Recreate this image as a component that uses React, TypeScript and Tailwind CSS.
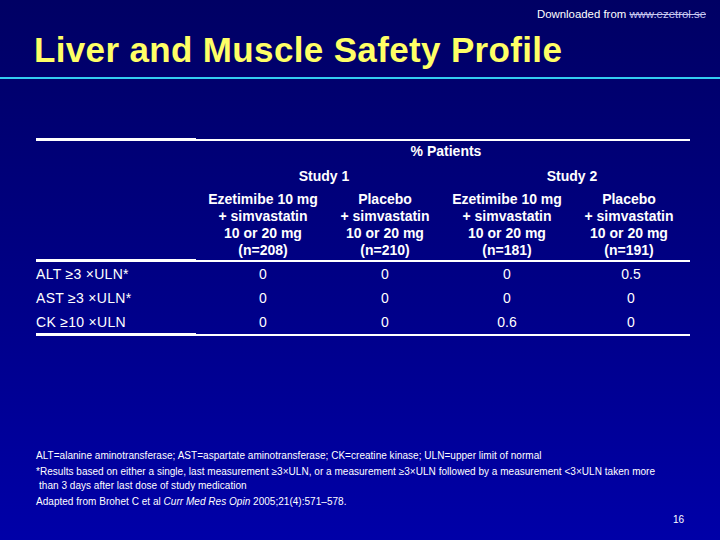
import React from "react";

const cols = [
  { l1: "Ezetimibe 10 mg", n: "(n=208)" },
  { l1: "Placebo", n: "(n=210)" },
  { l1: "Ezetimibe 10 mg", n: "(n=181)" },
  { l1: "Placebo", n: "(n=191)" },
];

const rows = [
  { label: "ALT \u22653 \u00d7ULN*", v: ["0", "0", "0", "0.5"] },
  { label: "AST \u22653 \u00d7ULN*", v: ["0", "0", "0", "0"] },
  { label: "CK \u226510 \u00d7ULN", v: ["0", "0", "0.6", "0"] },
];

function Rule() {
  return (
    <div className="flex items-center h-[3px]">
      <div className="w-[160px] h-[3px] bg-white" />
      <div className="flex-1 h-[2px] bg-white" />
    </div>
  );
}

export default function App() {
  return (
    <div
      className="w-[720px] h-[540px] flex flex-col bg-gradient-to-b from-[#000064] via-[#000084] to-[#0000a8] text-white overflow-hidden"
      style={{ fontFamily: '"Liberation Sans", Arial, sans-serif' }}
    >
      <div className="flex justify-end pr-[14px] pt-[8px] h-[22px] text-[11.4px] leading-[13px]">
        <span>Downloaded from&nbsp;</span>
        <span className="text-[#c8c8f0] line-through">www.ezetrol.se</span>
      </div>
      <div className="pl-[34px] mt-[6px] h-[48px] text-[35px] leading-[44px] font-bold text-[#ffff66] tracking-[0.35px]">
        Liver and Muscle Safety Profile
      </div>
      <div className="h-[2px] bg-[#33ccf2] mt-[1px]" />

      <div className="ml-[36px] w-[654px] mt-[59px]">
        <Rule />
        <div className="grid grid-cols-[166px_122px_122px_122px_122px] text-[14px]">
          <div />
          <div className="col-span-4 text-center font-bold leading-[20px]">% Patients</div>
          <div className="mt-[5px]" />
          <div className="col-span-2 text-center font-bold leading-[20px] mt-[5px]">Study 1</div>
          <div className="col-span-2 text-center font-bold leading-[20px] mt-[5px] pl-[8px]">Study 2</div>
          <div />
          {cols.map((c, i) => (
            <div key={i} className="text-center font-bold leading-[17px] mt-[5px]">
              <div>{c.l1}</div>
              <div>+ simvastatin</div>
              <div>10 or 20 mg</div>
              <div>{c.n}</div>
            </div>
          ))}
        </div>
        <Rule />
        <div className="grid grid-cols-[166px_122px_122px_122px_122px] text-[14px] h-[71px]">
          {rows.map((r, i) => (
            <React.Fragment key={i}>
              <div className="leading-[24px] tracking-[0.3px]">{r.label}</div>
              {r.v.map((v, j) => (
                <div key={j} className={"text-center leading-[24px]" + (j === 3 ? " pl-[4px]" : "")}>
                  {v}
                </div>
              ))}
            </React.Fragment>
          ))}
        </div>
        <Rule />
      </div>

      <div className="ml-[36px] mt-[113px] text-[10px] leading-[14px] tracking-[0.03px]">
        <div>ALT=alanine aminotransferase; AST=aspartate aminotransferase; CK=creatine kinase; ULN=upper limit of normal</div>
        <div className="mt-[2px]">
          *Results based on either a single, last measurement {"\u2265"}3{"\u00d7"}ULN, or a measurement {"\u2265"}3{"\u00d7"}ULN followed by a measurement &lt;3{"\u00d7"}ULN taken more
        </div>
        <div className="pl-[3px] leading-[13px]">than 3 days after last dose of study medication</div>
        <div className="mt-[3px]">
          Adapted from Brohet C et al <i>Curr Med Res Opin</i> 2005;21(4):571{"\u2013"}578.
        </div>
      </div>
      <div className="flex justify-end pr-[36px] mt-[5px] text-[10px] leading-[12px]">16</div>
    </div>
  );
}
